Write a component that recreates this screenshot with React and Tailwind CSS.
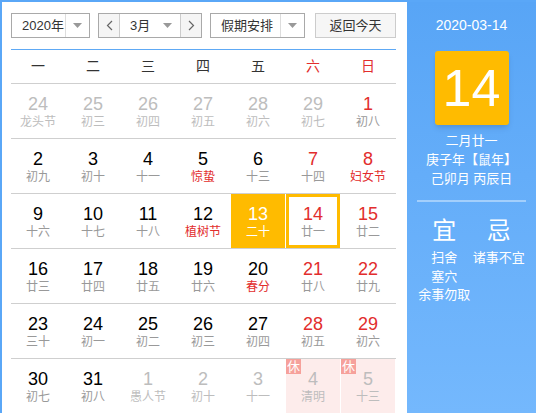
import React from "react";
import clsx from "clsx";

const RED = "text-[#e22d2d]";

// [day, lunar, flags] flags: g = other month, r = red number, f = red lunar, s = selected, t = today, h = holiday
const rows = [
  [["24", "龙头节", "g"], ["25", "初三", "g"], ["26", "初四", "g"], ["27", "初五", "g"], ["28", "初六", "g"], ["29", "初七", "g"], ["1", "初八", "r"]],
  [["2", "初九", ""], ["3", "初十", ""], ["4", "十一", ""], ["5", "惊蛰", "f"], ["6", "十三", ""], ["7", "十四", "r"], ["8", "妇女节", "rf"]],
  [["9", "十六", ""], ["10", "十七", ""], ["11", "十八", ""], ["12", "植树节", "f"], ["13", "二十", "s"], ["14", "廿一", "rt"], ["15", "廿二", "r"]],
  [["16", "廿三", ""], ["17", "廿四", ""], ["18", "廿五", ""], ["19", "廿六", ""], ["20", "春分", "f"], ["21", "廿八", "r"], ["22", "廿九", "r"]],
  [["23", "三十", ""], ["24", "初一", ""], ["25", "初二", ""], ["26", "初三", ""], ["27", "初四", ""], ["28", "初五", "r"], ["29", "初六", "r"]],
  [["30", "初七", ""], ["31", "初八", ""], ["1", "愚人节", "g"], ["2", "初十", "g"], ["3", "十一", "g"], ["4", "清明", "gh"], ["5", "十三", "gh"]],
];

const weekdays = ["一", "二", "三", "四", "五", "六", "日"];

const Caret = () => (
  <svg width="9" height="5" viewBox="0 0 9 5" className="block">
    <path d="M0 0 L9 0 L4.5 5 Z" fill="#999" />
  </svg>
);

const Chevron = ({ dir }) => (
  <svg width="7" height="11" viewBox="0 0 7 11" className="block">
    <path
      d={dir === "left" ? "M6 1 L1.5 5.5 L6 10" : "M1 1 L5.5 5.5 L1 10"}
      fill="none"
      stroke="#666"
      strokeWidth="1.2"
    />
  </svg>
);

const Cell = ({ day, lunar, flags }) => {
  const other = flags.includes("g");
  const selected = flags.includes("s");
  const today = flags.includes("t");
  const holiday = flags.includes("h");
  return (
    <div className="h-[54px] pr-px">
      <div
        className={clsx(
          "relative h-full flex flex-col items-center",
          selected && "bg-[#ffbb00]",
          holiday && "bg-[#fdeceb]",
          today ? "border-[3px] border-[#ffbb00] pt-[7px]" : "pt-[10px]"
        )}
      >
        {holiday && (
          <span className="absolute left-0 top-0 w-[15px] h-[15px] bg-[#f6a19b] text-white text-[13px] leading-[15px] text-center">
            休
          </span>
        )}
        <span
          className={clsx(
            "text-[18px] leading-[20px]",
            selected ? "text-white" : other ? "text-[#bdbdbd]" : flags.includes("r") ? RED : "text-black"
          )}
        >
          {day}
        </span>
        <span
          className={clsx(
            "text-[12px] leading-[16px] whitespace-nowrap",
            selected ? "text-white" : other ? "text-[#bdbdbd]" : flags.includes("f") ? RED : "text-[#999]"
          )}
        >
          {lunar}
        </span>
      </div>
    </div>
  );
};

export default function App() {
  return (
    <div
      className="flex w-[536px] h-[413px] overflow-hidden border-l-2 border-t-2 border-[#5aa7f7] bg-white"
      style={{ fontFamily: "'Liberation Sans', 'Noto Sans CJK SC', sans-serif" }}
    >
      {/* calendar body */}
      <div className="w-[405px] shrink-0 pl-[9px] pr-[11px] pt-[11px]">
        <div className="flex items-center h-[25px] text-[13px] text-[#333]">
          {/* year */}
          <div className="flex h-full w-[79px] border border-[#a9a9a9]">
            <div className="flex-1 min-w-0 pl-[10px] leading-[23px] whitespace-nowrap">2020年</div>
            <div className="w-[24px] shrink-0 border-l border-[#ddd] flex items-center justify-center">
              <Caret />
            </div>
          </div>
          {/* month */}
          <div className="flex h-full w-[104px] ml-[8px] border border-[#a9a9a9]">
            <div className="w-[21px] shrink-0 bg-[#f5f5f5] border-r border-[#ccc] flex items-center justify-center">
              <Chevron dir="left" />
            </div>
            <div className="flex-1 flex items-center pl-[10px] pr-[8px]">
              <span className="flex-1 leading-[23px] whitespace-nowrap">3月</span>
              <Caret />
            </div>
            <div className="w-[21px] shrink-0 bg-[#f5f5f5] border-l border-[#ccc] flex items-center justify-center">
              <Chevron dir="right" />
            </div>
          </div>
          {/* holidays */}
          <div className="flex h-full w-[95px] ml-[8px] border border-[#a9a9a9]">
            <div className="flex-1 min-w-0 pl-[10px] leading-[23px] whitespace-nowrap">假期安排</div>
            <div className="w-[24px] shrink-0 border-l border-[#ddd] flex items-center justify-center">
              <Caret />
            </div>
          </div>
          <button className="h-full w-[81px] ml-auto border border-[#ccc] bg-[#f6f6f6] text-[13px] text-[#333] leading-[23px] whitespace-nowrap">
            返回今天
          </button>
        </div>

        <div className="mt-[11px] border-t border-[#5ea9f5] grid grid-cols-7 h-[34px] items-center text-[14px]">
          {weekdays.map((w, i) => (
            <div key={w} className={clsx("text-center pr-px", i >= 5 ? RED : "text-[#333]")}>
              {w}
            </div>
          ))}
        </div>

        {rows.map((row, ri) => (
          <div key={ri} className="grid grid-cols-7 border-t border-[#cfcfcf]">
            {row.map(([d, l, f], ci) => (
              <Cell key={ci} day={d} lunar={l} flags={f} />
            ))}
          </div>
        ))}
      </div>

      {/* side panel */}
      <div className="flex-1 bg-linear-to-b from-[#58a5f6] to-[#74b8fd] text-white flex flex-col items-center pt-[13px]">
        <div className="text-[14px] leading-[20px]">2020-03-14</div>
        <div className="mt-[16px] w-[74px] h-[74px] rounded-[3px] bg-[#ffbb00] shadow-md flex items-center justify-center text-[52px] leading-none">
          14
        </div>
        <div className="mt-[6px] text-[13px] leading-[19px] text-center">
          <div>二月廿一</div>
          <div>庚子年【鼠年】</div>
          <div>己卯月 丙辰日</div>
        </div>
        <div className="mt-[12px] self-stretch mx-[10px] h-[2px] bg-[#a3cffc]" />
        <div className="mt-[15px] self-stretch mx-[10px] grid grid-cols-2 text-center">
          <div>
            <div className="text-[24px] leading-[28px]">宜</div>
            <div className="mt-[4px] text-[13px] leading-[18.5px]">
              <div>扫舍</div>
              <div>塞穴</div>
              <div className="whitespace-nowrap">余事勿取</div>
            </div>
          </div>
          <div>
            <div className="text-[24px] leading-[28px]">忌</div>
            <div className="mt-[4px] text-[13px] leading-[18.5px] whitespace-nowrap">诸事不宜</div>
          </div>
        </div>
      </div>
    </div>
  );
}
